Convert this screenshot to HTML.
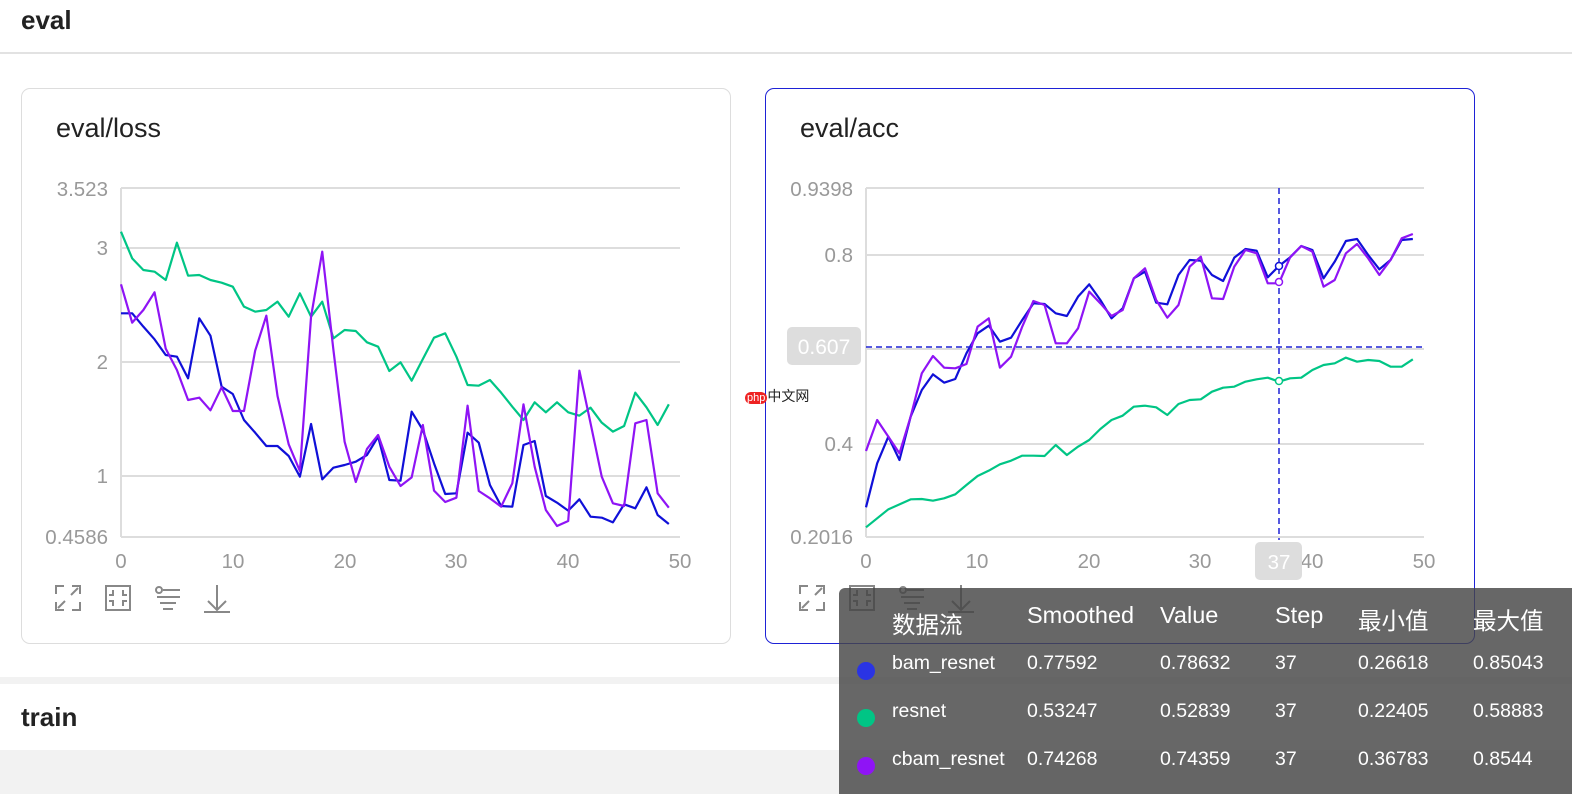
<!DOCTYPE html>
<html><head><meta charset="utf-8"><style>
*{margin:0;padding:0;box-sizing:border-box}
body{width:1572px;height:794px;overflow:hidden;background:#fff;font-family:"Liberation Sans","Noto Sans CJK SC",sans-serif;position:relative}
.a{position:absolute}
.card{position:absolute;top:88px;width:710px;height:556px;border:1px solid #ddd;border-radius:9px;background:#fff}
.title{position:absolute;left:34px;top:24px;font-size:27px;color:#222}
.tt{position:absolute;left:839px;top:588px;width:733px;height:206px;background:rgba(70,70,70,.82);border-radius:6px 0 0 0;color:#fff;font-size:19.5px}
.tt div{position:absolute;white-space:nowrap}
.h{font-size:23.5px;top:14px}
.dot{width:18px;height:18px;border-radius:50%;left:18px}
</style></head><body>
<div class="a" style="left:21px;top:5px;font-size:26px;font-weight:bold;color:#222">eval</div>
<div class="a" style="left:0;top:52px;width:1572px;height:2px;background:#e2e2e2"></div>
<div class="card" style="left:21px"><div class="title">eval/loss</div></div>
<div class="card" style="left:765px;border-color:#1e22d6"><div class="title">eval/acc</div></div>
<div class="a" style="left:0;top:677px;width:1572px;height:7px;background:#f2f2f2"></div>
<div class="a" style="left:21px;top:702px;font-size:26px;font-weight:bold;color:#222">train</div>
<div class="a" style="left:0;top:750px;width:1572px;height:44px;background:#f2f2f2"></div>
<div class="a" style="left:745px;top:386px;font-size:14px;color:#222"><span style="background:#e22;color:#fff;border-radius:7px;padding:0 2px;font-size:11px">php</span>中文网</div>

<svg class="a" style="left:0;top:0" width="1572" height="794" font-family="Liberation Sans" font-size="20.5" fill="#999">
<g stroke="#ddd" stroke-width="2">
<line x1="121" y1="188" x2="680" y2="188"/><line x1="121" y1="248" x2="680" y2="248"/><line x1="121" y1="362" x2="680" y2="362"/><line x1="121" y1="476" x2="680" y2="476"/><line x1="121" y1="537" x2="680" y2="537"/><line x1="121" y1="188" x2="121" y2="537"/>
<line x1="866" y1="188" x2="1424" y2="188"/><line x1="866" y1="255" x2="1424" y2="255"/><line x1="866" y1="349" x2="1424" y2="349"/><line x1="866" y1="444" x2="1424" y2="444"/><line x1="866" y1="537" x2="1424" y2="537"/><line x1="866" y1="188" x2="866" y2="537"/>
</g>
<g text-anchor="end"><text x="108" y="196">3.523</text><text x="108" y="255">3</text><text x="108" y="369">2</text><text x="108" y="483">1</text><text x="108" y="544">0.4586</text>
<text x="853" y="196">0.9398</text><text x="853" y="262">0.8</text><text x="853" y="451">0.4</text><text x="853" y="544">0.2016</text></g>
<g text-anchor="middle"><text x="121" y="568">0</text><text x="233" y="568">10</text><text x="345" y="568">20</text><text x="456" y="568">30</text><text x="568" y="568">40</text><text x="680" y="568">50</text>
<text x="866" y="568">0</text><text x="977" y="568">10</text><text x="1089" y="568">20</text><text x="1200" y="568">30</text><text x="1312" y="568">40</text><text x="1424" y="568">50</text></g>
<g fill="none" stroke-width="2.2" stroke-linejoin="round" transform="translate(121,170) scale(11.18,0.33333)">
<polyline vector-effect="non-scaling-stroke" stroke="#00c585" points="0,185 1,265 2,300 3,305 4,330 5,218 6,317 7,315 8,330 9,338 10,350 11,410 12,425 13,420 14,395 15,440 16,370 17,440 18,395 19,505 20,480 21,483 22,517 23,530 24,603 25,577 26,632 27,567 28,503 29,490 30,560 31,645 32,647 33,630 34,668 35,710 36,750 37,697 38,727 39,697 40,727 41,737 42,713 43,758 44,785 45,768 46,668 47,712 48,765 49,703"/>
<polyline vector-effect="non-scaling-stroke" stroke="#1010d8" points="0,430 1,430 2,470 3,508 4,555 5,560 6,625 7,445 8,497 9,650 10,672 11,750 12,788 13,828 14,828 15,858 16,920 17,762 18,928 19,893 20,885 21,875 22,855 23,800 24,930 25,932 26,725 27,780 28,880 29,972 30,970 31,788 32,818 33,945 34,1008 35,1010 36,825 37,813 38,978 39,998 40,1022 41,988 42,1040 43,1043 44,1057 45,1003 46,1015 47,952 48,1035 49,1062"/>
<polyline vector-effect="non-scaling-stroke" stroke="#8f14f5" points="0,343 1,458 2,420 3,367 4,536 5,600 6,690 7,683 8,721 9,652 10,723 11,723 12,542 13,437 14,678 15,823 16,903 17,440 18,245 19,540 20,815 21,936 22,837 23,795 24,890 25,948 26,922 27,765 28,962 29,996 30,983 31,707 32,963 33,985 34,1010 35,940 36,703 37,890 38,1020 39,1068 40,1053 41,602 42,760 43,920 44,1000 45,1008 46,760 47,750 48,970 49,1013"/>
</g>
<g fill="none" stroke-width="2.2" stroke-linejoin="round" transform="translate(866,170) scale(11.16,0.33333)">
<polyline vector-effect="non-scaling-stroke" stroke="#00c585" points="0,1072 1,1045 2,1018 3,1003 4,988 5,987 6,992 7,985 8,973 9,945 10,918 11,902 12,883 13,872 14,857 15,857 16,858 17,825 18,855 19,830 20,810 21,777 22,750 23,737 24,710 25,707 26,712 27,735 28,702 29,690 30,688 31,665 32,653 33,650 34,635 35,628 36,623 37,635 38,625 39,623 40,600 41,585 42,580 43,563 44,575 45,570 46,573 47,590 48,590 49,568"/>
<polyline vector-effect="non-scaling-stroke" stroke="#1010d8" points="0,1012 1,880 2,800 3,870 4,740 5,660 6,613 7,638 8,627 9,550 10,490 11,467 12,515 13,503 14,450 15,400 16,402 17,430 18,438 19,380 20,343 21,390 22,445 23,415 24,325 25,305 26,398 27,403 28,315 29,270 30,272 31,315 32,333 33,263 34,237 35,242 36,322 37,288 38,262 39,228 40,240 41,325 42,275 43,213 44,207 45,255 46,298 47,270 48,210 49,207"/>
<polyline vector-effect="non-scaling-stroke" stroke="#8f14f5" points="0,843 1,750 2,800 3,850 4,740 5,610 6,558 7,593 8,595 9,582 10,470 11,445 12,593 13,560 14,470 15,393 16,405 17,520 18,520 19,475 20,365 21,400 22,438 23,420 24,325 25,295 26,390 27,443 28,405 29,290 30,260 31,385 32,387 33,290 34,240 35,250 36,340 37,340 38,262 39,228 40,245 41,350 42,330 43,250 44,222 45,265 46,315 47,270 48,205 49,192"/>
</g>
<g stroke="#1e22d6" stroke-width="1.5" stroke-dasharray="6,4"><line x1="1279" y1="188" x2="1279" y2="540"/><line x1="866" y1="347" x2="1424" y2="347"/></g>
<g fill="#fff" stroke-width="1.5"><circle cx="1279" cy="266" r="3.5" stroke="#1010d8"/><circle cx="1279" cy="282" r="3.5" stroke="#8f14f5"/><circle cx="1279" cy="381" r="3.5" stroke="#00c585"/></g>
<rect x="787" y="327" width="74" height="38" rx="5" fill="#ddd"/><text x="824" y="354" fill="#fff" text-anchor="middle" font-size="21">0.607</text>
<rect x="1255" y="542" width="47" height="38" rx="5" fill="#ddd"/><text x="1279" y="569" fill="#fff" text-anchor="middle">37</text>
<g fill="none" stroke="#888" stroke-width="2">
<g id="ic"><path d="M56 594v-8h8M72 586h8v8M56 602v8h8M80 602v8h-8M58 608l7-7M78 588l-7 7"/>
<rect x="106" y="586" width="24" height="24"/><path d="M113 590v5h-4M123 590v5h4M113 606v-5h-4M123 606v-5h4"/>
<circle cx="159" cy="590" r="3"/><path d="M163 590h17M157 597h23M160 603h16M163 609h10"/>
<path d="M217 585v25M208 601l9 9 9-9M204 612h26"/></g>
<use href="#ic" x="744"/>
</g>
</svg>

<div class="tt">
<div class="h" style="left:53px;top:18px">数据流</div>
<div class="h" style="left:188px">Smoothed</div>
<div class="h" style="left:321px">Value</div>
<div class="h" style="left:436px">Step</div>
<div class="h" style="left:519px">最小值</div>
<div class="h" style="left:634px">最大值</div>
<div class="dot" style="top:74px;background:#2a34e4"></div>
<div style="left:53px;top:64px">bam_resnet</div><div style="left:188px;top:64px">0.77592</div><div style="left:321px;top:64px">0.78632</div><div style="left:436px;top:64px">37</div><div style="left:519px;top:64px">0.26618</div><div style="left:634px;top:64px">0.85043</div>
<div class="dot" style="top:121px;background:#00c585"></div>
<div style="left:53px;top:112px">resnet</div><div style="left:188px;top:112px">0.53247</div><div style="left:321px;top:112px">0.52839</div><div style="left:436px;top:112px">37</div><div style="left:519px;top:112px">0.22405</div><div style="left:634px;top:112px">0.58883</div>
<div class="dot" style="top:169px;background:#8f14f5"></div>
<div style="left:53px;top:160px">cbam_resnet</div><div style="left:188px;top:160px">0.74268</div><div style="left:321px;top:160px">0.74359</div><div style="left:436px;top:160px">37</div><div style="left:519px;top:160px">0.36783</div><div style="left:634px;top:160px">0.8544</div>
</div>
</body></html>
